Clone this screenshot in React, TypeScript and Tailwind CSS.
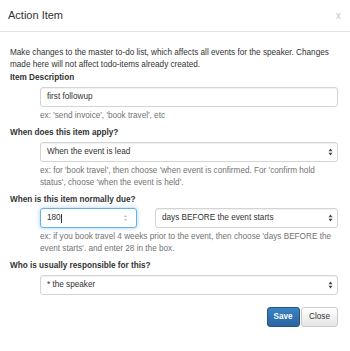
import React from 'react';

const SelectArrows: React.FC = () => (
  <svg width="5" height="8" viewBox="0 0 5 8" className="absolute right-[4px] top-1/2 -translate-y-1/2">
    <path d="M2.5 0.5 L4.5 3.2 L0.5 3.2 Z" fill="#444" />
    <path d="M2.5 7.5 L4.5 4.8 L0.5 4.8 Z" fill="#444" />
  </svg>
);

const Field: React.FC<{ children: React.ReactNode; focus?: boolean; className?: string }> = ({
  children,
  focus,
  className,
}) => (
  <div
    className={
      'relative flex h-[20px] items-center rounded-[3px] border bg-white pl-[6px] ' +
      (focus
        ? 'border-[#66afe9] shadow-[0_0_4px_rgba(102,175,233,0.6)] '
        : 'border-[#d4d4d4] shadow-[inset_0_1px_1px_rgba(0,0,0,0.06)] ') +
      (className || '')
    }
  >
    {children}
  </div>
);

const Label: React.FC<{ children: React.ReactNode }> = ({ children }) => (
  <div className="mb-[3px] font-bold leading-[11.7px] text-[#333]">{children}</div>
);

export default function App() {
  return (
    <div className="h-[351px] w-[350px] bg-white font-['Liberation_Sans',Arial,sans-serif] text-[8.2px] text-[#333]">
      {/* header */}
      <div className="flex h-[32px] items-center justify-between border-b border-[#e5e5e5] pl-[8px] pr-[9px]">
        <div className="text-[11px] leading-[15px] text-[#333]">Action Item</div>
        <div className="text-[10px] leading-none text-[#c4c4c4]">x</div>
      </div>

      {/* body */}
      <div className="px-[10px] pt-[15px]">
        <p className="mb-[2px] leading-[11.6px]">
          Make changes to the master to-do list, which affects all events for the speaker. Changes
          made here will not affect todo-items already created.
        </p>

        <div className="mb-[5.5px]">
          <Label>Item Description</Label>
          <div className="pl-[30px] pr-[2px]">
            <Field>first followup</Field>
          </div>
          <div className="mt-[3px] pl-[30px] leading-[11.7px] text-[#737373]">ex: 'send invoice', 'book travel', etc</div>
        </div>

        <div className="mb-[5.5px]">
          <Label>When does this item apply?</Label>
          <div className="pl-[30px] pr-[2px]">
            <Field>
              When the event is lead
              <SelectArrows />
            </Field>
          </div>
          <div className="mt-[3px] pl-[30px] pr-[12px] leading-[11.7px] text-[#737373]">
            ex: for 'book travel', then choose 'when event is confirmed. For 'confirm hold status', choose 'when the event is held'.
          </div>
        </div>

        <div className="mb-[5.5px]">
          <Label>When is this item normally due?</Label>
          <div className="flex gap-[18px] pl-[30px] pr-[2px]">
            <Field focus className="w-[97px]">
              180
              <span className="ml-[0.5px] inline-block h-[9px] w-px bg-[#333]" />
              <svg width="5" height="8" viewBox="0 0 5 8" className="absolute right-[8px] top-1/2 -translate-y-1/2">
                <path d="M2.5 1 L4 3 L1 3 Z" fill="#bbb" />
                <path d="M2.5 7 L4 5 L1 5 Z" fill="#bbb" />
              </svg>
            </Field>
            <Field className="flex-1">
              days BEFORE the event starts
              <SelectArrows />
            </Field>
          </div>
          <div className="mt-[3px] pl-[30px] pr-[8px] leading-[11.7px] text-[#737373]">
            ex: if you book travel 4 weeks prior to the event, then choose 'days BEFORE the event starts'. and enter 28 in the box.
          </div>
        </div>

        <div>
          <Label>Who is usually responsible for this?</Label>
          <div className="pl-[30px] pr-[2px]">
            <Field>
              * the speaker
              <SelectArrows />
            </Field>
          </div>
        </div>

        {/* footer */}
        <div className="mt-[12px] flex justify-end gap-[1.5px] pr-[2px]">
          <button className="h-[20px] w-[33px] rounded-[3px] border border-[#245580] bg-gradient-to-b from-[#3a83c4] to-[#2a64a0] text-[8.2px] font-bold text-white">
            Save
          </button>
          <button className="h-[20px] w-[37px] rounded-[3px] border border-[#ccc] bg-gradient-to-b from-white to-[#e4e4e4] text-[8.2px] text-[#333]">
            Close
          </button>
        </div>
      </div>
    </div>
  );
}
